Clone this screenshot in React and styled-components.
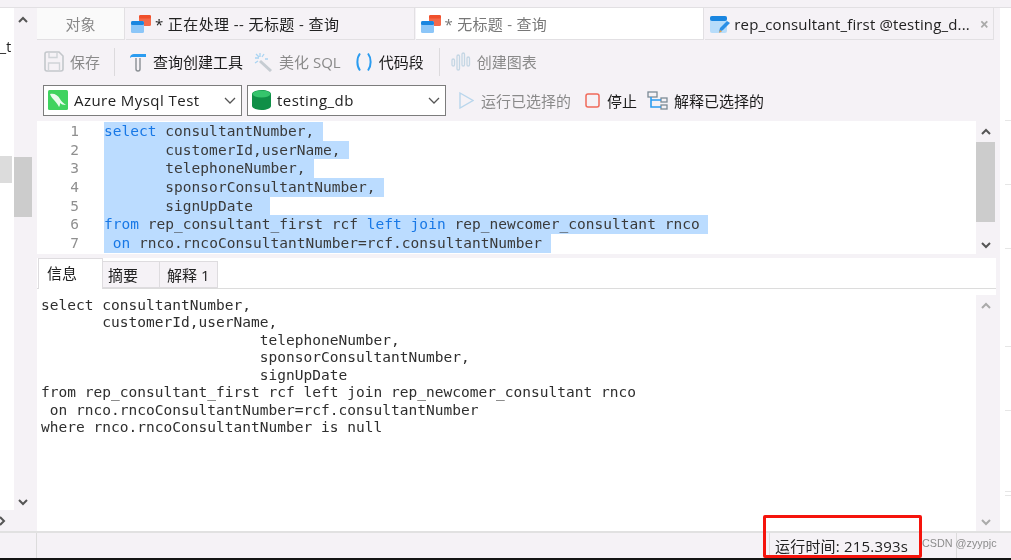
import React from "react";
import styled, { createGlobalStyle } from "styled-components";

const panel = "#f5f2f6";
const line = "#e2e0e3";
const ui = `"Open Sans", "Noto Sans CJK SC", sans-serif`;

const Global = createGlobalStyle`
  html, body { margin: 0; padding: 0; background: #fff; }
  body { font-family: ${ui}; overflow: hidden; }
`;

const Shell = styled.div`
  width: 1011px;
  height: 560px;
  position: relative;
  display: flex;
  flex-direction: column;
  overflow: hidden;
  background: ${panel};
  filter: blur(0.3px);
`;
const TopStrip = styled.div`
  height: 7px;
  flex: none;
  border-bottom: 1px solid ${line};
`;
const Body = styled.div`
  flex: 1;
  min-height: 0;
  display: flex;
`;
const LeftPane = styled.div`
  width: 14px;
  flex: none;
  display: flex;
  flex-direction: column;
`;
const Tree = styled.div`
  flex: 1;
  background: #fff;
  overflow: hidden;
  padding-top: 29px;
  font-size: 14px;
  line-height: 20px;
  color: #222;
  white-space: nowrap;
`;
const TreeSelected = styled.div`
  width: 12px;
  height: 27px;
  margin-top: 99px;
  background: #dcdcdc;
`;
const HScroll = styled.div`
  height: 21px;
  flex: none;
  display: flex;
  align-items: center;
`;
const Rail = styled.div`
  width: 23px;
  flex: none;
  display: flex;
  flex-direction: column;
  padding: 8px 5px 25px 0;
  box-sizing: border-box;
  align-items: center;
`;
const RailThumb = styled.div`
  width: 18px;
  height: 60px;
  margin-top: 134px;
  margin-bottom: auto;
  background: #cccccc;
`;
const Work = styled.div`
  width: 963px;
  flex: none;
  display: flex;
  flex-direction: column;
`;
const TabBar = styled.div`
  height: 32px;
  flex: none;
  display: flex;
  width: 958px;
`;
const Tab = styled.div`
  box-sizing: border-box;
  width: ${(p) => p.$w}px;
  margin-right: 1px;
  display: flex;
  align-items: center;
  padding-left: 5px;
  gap: 4px;
  font-size: 15px;
  white-space: nowrap;
  color: ${(p) => (p.$dim ? "#777" : "#222")};
  background: ${(p) => p.$bg};
  border-bottom: 1px solid ${line};
  border-right: 1px solid ${line};
`;
const ObjectTab = styled(Tab)`
  justify-content: center;
  padding-left: 0;
  color: #888;
`;
const TabTitle = styled.span`
  flex: 1;
  letter-spacing: ${(p) => p.$ls}px;
`;
const TabClose = styled.span`
  color: #aaa;
  font-size: 16px;
  font-weight: 700;
  margin-right: 4px;
  line-height: 1;
`;
const Toolbar = styled.div`
  height: 38px;
  box-sizing: border-box;
  padding: 5px 0 0 7px;
  flex: none;
  display: flex;
  align-items: center;
`;
const ToolItem = styled.div`
  display: flex;
  align-items: center;
  gap: ${(p) => p.$gap || 6}px;
  margin-left: ${(p) => p.$ml || 0}px;
  margin-right: ${(p) => p.$mr || 0}px;
  font-size: 15px;
  white-space: nowrap;
  color: ${(p) => (p.$dim ? "#8a8a8a" : "#1c1c1c")};
`;
const Divider = styled.div`
  width: 1px;
  height: 28px;
  background: #dcdadd;
  margin: 0 ${(p) => p.$r}px 0 ${(p) => p.$l}px;
`;
const RunBar = styled.div`
  height: 31px;
  margin-top: 7px;
  flex: none;
  display: flex;
  align-items: center;
  padding-left: 6px;
`;
const Select = styled.div`
  box-sizing: border-box;
  width: 199px;
  height: 31px;
  margin-right: 5px;
  display: flex;
  align-items: center;
  gap: 6px;
  padding: 0 4px 1px ${(p) => p.$pl}px;
  background: #fff;
  border: 1px solid #7c7c7c;
  font-size: 15px;
  letter-spacing: 0.45px;
  color: #222;
`;
const SelectText = styled.span`
  flex: 1;
`;
const Editor = styled.div`
  height: 133px;
  margin-top: 5px;
  flex: none;
  display: flex;
  width: 958px;
`;
const Code = styled.div`
  width: 939px;
  box-sizing: border-box;
  padding-top: 1px;
  background: #fff;
  font-family: "DejaVu Sans Mono", monospace;
  font-size: 14.5px;
  letter-spacing: 0.03px;
  overflow: hidden;
`;
const CodeRow = styled.div`
  height: 18.7px;
  line-height: 18.7px;
  display: flex;
  white-space: pre;
  color: #3a3a3a;
`;
const Gutter = styled.div`
  width: 42px;
  margin-right: 25px;
  text-align: right;
  color: #8f8f8f;
  flex: none;
`;
const Sel = styled.span`
  background: #bbdcff;
`;
const Kw = styled.span`
  color: #1878e6;
`;
const VScroll = styled.div`
  width: 19px;
  flex: none;
  display: flex;
  flex-direction: column;
  align-items: center;
  justify-content: space-between;
  padding: 7px 0 5px;
  box-sizing: border-box;
`;
const VThumb = styled.div`
  width: 19px;
  height: 80px;
  margin: 7px 0 auto;
  background: #cccccc;
`;
const ResultTabs = styled.div`
  height: 31px;
  margin-top: 4px;
  width: 959px;
  flex: none;
  box-sizing: border-box;
  background: #fff;
  display: flex;
  align-items: flex-end;
  padding-left: 1px;
  border-bottom: 1px solid #dcdcdc;
`;
const ResultTab = styled.div`
  box-sizing: border-box;
  width: ${(p) => p.$w}px;
  height: ${(p) => (p.$on ? 31 : 27)}px;
  display: flex;
  align-items: center;
  padding: 0 0 ${(p) => (p.$on ? 3 : 0)}px ${(p) => p.$pl}px;
  font-size: 15px;
  color: #222;
  background: ${(p) => (p.$on ? "#fff" : panel)};
  border: 1px solid #dedcdf;
  border-left-width: ${(p) => (p.$on ? 1 : 0)}px;
  border-bottom: ${(p) => (p.$on ? "none" : "1px solid #dedcdf")};
  margin-bottom: ${(p) => (p.$on ? -1 : 0)}px;
`;
const ResultGap = styled.div`
  height: 6px;
  width: 959px;
  flex: none;
  background: #fff;
`;
const ResultArea = styled.div`
  flex: 1;
  min-height: 0;
  display: flex;
  width: 958px;
`;
const Output = styled.pre`
  margin: 0;
  width: 939px;
  box-sizing: border-box;
  padding: 2px 0 0 4px;
  background: #fff;
  font-family: "DejaVu Sans Mono", monospace;
  font-size: 14.5px;
  letter-spacing: 0.02px;
  line-height: 17.43px;
  color: #2e2e2e;
`;
const RightPane = styled.div`
  width: 11px;
  flex: none;
  background: #fff;
  display: flex;
  flex-direction: column;
  padding-left: 5px;
  box-sizing: border-box;
`;
const RightRule = styled.div`
  height: 1px;
  flex: none;
  margin-top: ${(p) => p.$mt}px;
  background: #e6e6e6;
`;
const StatusBar = styled.div`
  box-sizing: border-box;
  height: 27px;
  flex: none;
  display: flex;
  align-items: center;
  border-top: 2px solid #e1e1e1;
`;
const StatusCell = styled.div`
  box-sizing: border-box;
  width: ${(p) => p.$w}px;
  height: 100%;
  flex: none;
  padding-left: 5px;
  border-right: ${(p) => (p.$edge ? "1px solid #dcdcdc" : "none")};
  display: flex;
  align-items: center;
  font-size: 15px;
  letter-spacing: 0.2px;
  color: #222;
  white-space: nowrap;
`;
const BlackEdge = styled.div`
  height: 2px;
  flex: none;
  background: #141414;
`;
const RedBox = styled.div`
  position: absolute;
  left: 763px;
  top: 515px;
  width: 159px;
  height: 43px;
  box-sizing: border-box;
  border: 3px solid #f5140c;
  border-radius: 2px;
`;
const Watermark = styled.div`
  position: absolute;
  left: 922px;
  top: 536px;
  font-family: "Liberation Sans", sans-serif;
  font-size: 10.8px;
  line-height: 14px;
  color: #8c8c8c;
  white-space: nowrap;
`;

const Chevron = ({ up, color = "#555" }) => (
  <svg width="10" height="7" viewBox="0 0 10 7" style={{ flex: "none" }}>
    <polyline
      points={up ? "1,6 5,2 9,6" : "1,1 5,5 9,1"}
      fill="none"
      stroke={color}
      strokeWidth="2"
    />
  </svg>
);
const SelectChevron = () => (
  <svg width="12" height="7" viewBox="0 0 12 7" style={{ flex: "none", marginRight: 1 }}>
    <polyline points="1,1 6,6 11,1" fill="none" stroke="#555" strokeWidth="1.3" />
  </svg>
);
const QueryIcon = () => (
  <svg width="20" height="20" viewBox="0 0 20 20" style={{ flex: "none" }}>
    <rect x="8" y="1" width="12" height="11" rx="1.5" fill="#f4694a" />
    <rect x="8" y="1" width="12" height="3.5" rx="1.5" fill="#f0502c" />
    <rect x="0" y="7" width="13" height="12" rx="1.5" fill="#8cc6f8" />
    <rect x="0" y="7" width="13" height="4" rx="1.5" fill="#1a86e0" />
  </svg>
);
const TableEditIcon = () => (
  <svg width="20" height="20" viewBox="0 0 20 20" style={{ flex: "none" }}>
    <rect x="0" y="2" width="17" height="17" rx="2" fill="#b7dcfa" />
    <rect x="0" y="2" width="17" height="5" rx="2" fill="#1a86e0" />
    <path d="M9 18l1-4 7-7 3 2-7 7z" fill="#2b8fe6" />
    <path d="M9 19l1-3 2 1.5z" fill="#e8a24a" />
  </svg>
);
const SaveIcon = () => (
  <svg width="20" height="21" viewBox="0 0 20 21" style={{ flex: "none" }}>
    <path d="M1 3a2 2 0 0 1 2-2h12l4 4v13a2 2 0 0 1-2 2H3a2 2 0 0 1-2-2z" fill="none" stroke="#c3c7cb" strokeWidth="1.6" />
    <path d="M5 1.500v5h8v-5M4.500 20v-8h11v8" fill="none" stroke="#d0d4d8" strokeWidth="1.4" />
  </svg>
);
const BuilderIcon = () => (
  <svg width="18" height="20" viewBox="0 0 18 20" style={{ flex: "none" }}>
    <path d="M1 6c0-3 2-4 4-4h12v3H3.500C2.500 5 1.500 5.500 1 6z" fill="#2b9cf0" />
    <path d="M7 6v11a2 2 0 0 0 4 0V6" fill="none" stroke="#8a8f94" strokeWidth="1.4" />
  </svg>
);
const WandIcon = () => (
  <svg width="19" height="20" viewBox="0 0 19 20" style={{ flex: "none" }}>
    <path d="M6 9l11 10" stroke="#c6ccd2" strokeWidth="3" />
    <path d="M6 1v4M1 6h4M2 2l3 3M10 2L8 5M1 11l3-2M11 7h3" stroke="#a9d4f2" strokeWidth="1.3" />
  </svg>
);
const ParensIcon = () => (
  <svg width="18" height="20" viewBox="0 0 18 20" style={{ flex: "none" }}>
    <path d="M5 1.500C1.500 6 1.500 14 5 18.500M13 1.500c3.500 4.500 3.500 12.500 0 17" fill="none" stroke="#2b9cf0" strokeWidth="2" />
  </svg>
);
const ChartIcon = () => (
  <svg width="20" height="20" viewBox="0 0 20 20" style={{ flex: "none" }}>
    <g fill="none" stroke="#c4d6e4" strokeWidth="1.3">
      <rect x="1" y="7" width="2.5" height="7" rx="1.25" />
      <rect x="6" y="3" width="2.5" height="15" rx="1.25" />
      <rect x="11" y="1" width="2.5" height="13" rx="1.25" />
      <rect x="16" y="5" width="2.5" height="9" rx="1.25" />
    </g>
  </svg>
);
const MysqlIcon = () => (
  <svg width="20" height="20" viewBox="0 0 20 20" style={{ flex: "none" }}>
    <rect width="20" height="20" rx="1.5" fill="#3fd35f" />
    <path d="M2 4c4-1 8 1 10 5 1 2 3 4 6 6-3 0-5-1-6-2 0 1 0 3-1 4-1-2-3-5-5-7-1-1-3-3-4-6z" fill="#e9fbee" />
  </svg>
);
const DbIcon = () => (
  <svg width="19" height="20" viewBox="0 0 19 20" style={{ flex: "none" }}>
    <path d="M0 4c0-2 4-4 9.500-4S19 2 19 4v12c0 2-4 4-9.500 4S0 18 0 16z" fill="#0f8f47" />
    <ellipse cx="9.5" cy="4" rx="9" ry="3.5" fill="#35c46c" />
  </svg>
);
const PlayIcon = () => (
  <svg width="15" height="17" viewBox="0 0 15 17" style={{ flex: "none" }}>
    <path d="M1 1l13 7.500L1 16z" fill="none" stroke="#b9d6ec" strokeWidth="1.4" />
  </svg>
);
const StopIcon = () => (
  <svg width="15" height="15" viewBox="0 0 15 15" style={{ flex: "none" }}>
    <rect x="1" y="1" width="13" height="13" rx="2" fill="none" stroke="#f0695a" strokeWidth="1.5" />
  </svg>
);
const ExplainIcon = () => (
  <svg width="21" height="20" viewBox="0 0 21 20" style={{ flex: "none" }}>
    <g fill="none" strokeWidth="1.3">
      <rect x="1" y="1" width="9" height="5" stroke="#7b8a96" />
      <rect x="14" y="7" width="6" height="4" stroke="#7b8a96" />
      <rect x="14" y="14" width="6" height="4" stroke="#7b8a96" />
      <path d="M4 6v10h10M4 9h10" stroke="#2b9cf0" strokeWidth="1.6" />
    </g>
  </svg>
);

const editorLines = [
  <><Kw>select</Kw> consultantNumber, </>,
  "       customerId,userName, ",
  "       telephoneNumber, ",
  "       sponsorConsultantNumber, ",
  "       signUpDate  ",
  <><Kw>from</Kw> rep_consultant_first rcf <Kw>left join</Kw> rep_newcomer_consultant rnco </>,
  <> <Kw>on</Kw> rnco.rncoConsultantNumber=rcf.consultantNumber </>,
];

const outputText = `select consultantNumber,
       customerId,userName,
                         telephoneNumber,
                         sponsorConsultantNumber,
                         signUpDate
from rep_consultant_first rcf left join rep_newcomer_consultant rnco
 on rnco.rncoConsultantNumber=rcf.consultantNumber
where rnco.rncoConsultantNumber is null`;

const rightRuleGaps = [112, 63, 63, 97, 63, 80, 3];

export default function App() {
  return (
    <Shell>
      <Global />
      <TopStrip />
      <Body>
        <LeftPane>
          <Tree>
            _t
            <TreeSelected />
          </Tree>
          <HScroll>
            <svg width="6" height="10" viewBox="0 0 6 10">
              <polyline points="0,1 4,5 0,9" fill="none" stroke="#555" strokeWidth="2" />
            </svg>
          </HScroll>
        </LeftPane>
        <Rail>
          <Chevron up />
          <RailThumb />
          <Chevron />
        </Rail>
        <Work>
          <TabBar>
            <ObjectTab $w={88} $bg="#fafafa">对象</ObjectTab>
            <Tab $w={289} $bg={panel}>
              <QueryIcon />
              <TabTitle $ls={0.4}>* 正在处理 -- 无标题 - 查询</TabTitle>
            </Tab>
            <Tab $w={289} $bg="#fff" $dim>
              <QueryIcon />
              <TabTitle $ls={0.25}>* 无标题 - 查询</TabTitle>
            </Tab>
            <Tab $w={289} $bg={panel}>
              <TableEditIcon />
              <TabTitle $ls={0.15}>rep_consultant_first @testing_d...</TabTitle>
              <TabClose>×</TabClose>
            </Tab>
          </TabBar>
          <Toolbar>
            <ToolItem $dim>
              <SaveIcon />
              保存
            </ToolItem>
            <Divider $l={14} $r={14} />
            <ToolItem $mr={11}>
              <BuilderIcon />
              查询创建工具
            </ToolItem>
            <ToolItem $dim $mr={14}>
              <WandIcon />
              美化 SQL
            </ToolItem>
            <ToolItem>
              <ParensIcon />
              代码段
            </ToolItem>
            <Divider $l={15} $r={11} />
            <ToolItem $dim>
              <ChartIcon />
              创建图表
            </ToolItem>
          </Toolbar>
          <RunBar>
            <Select $pl={4}>
              <MysqlIcon />
              <SelectText>Azure Mysql Test</SelectText>
              <SelectChevron />
            </Select>
            <Select $pl={4}>
              <DbIcon />
              <SelectText>testing_db</SelectText>
              <SelectChevron />
            </Select>
            <ToolItem $dim $ml={8} $mr={14} $gap={7}>
              <PlayIcon />
              运行已选择的
            </ToolItem>
            <ToolItem $mr={10} $gap={7}>
              <StopIcon />
              停止
            </ToolItem>
            <ToolItem>
              <ExplainIcon />
              解释已选择的
            </ToolItem>
          </RunBar>
          <Editor>
            <Code>
              {editorLines.map((text, i) => (
                <CodeRow key={i}>
                  <Gutter>{i + 1}</Gutter>
                  <Sel>{text}</Sel>
                </CodeRow>
              ))}
            </Code>
            <VScroll>
              <Chevron up />
              <VThumb />
              <Chevron />
            </VScroll>
          </Editor>
          <ResultTabs>
            <ResultTab $w={65} $pl={8} $on>信息</ResultTab>
            <ResultTab $w={57} $pl={5}>摘要</ResultTab>
            <ResultTab $w={58} $pl={7}>解释 1</ResultTab>
          </ResultTabs>
          <ResultGap />
          <ResultArea>
            <Output>{outputText}</Output>
            <VScroll>
              <Chevron up color="#aaa" />
              <Chevron color="#aaa" />
            </VScroll>
          </ResultArea>
        </Work>
        <RightPane>
          {rightRuleGaps.map((gap, i) => (
            <RightRule key={i} $mt={gap} />
          ))}
        </RightPane>
      </Body>
      <StatusBar>
        <StatusCell $w={37} $edge />
        <StatusCell $w={733} $edge />
        <StatusCell $w={187} $edge>运行时间: 215.393s</StatusCell>
      </StatusBar>
      <BlackEdge />
      <RedBox />
      <Watermark>CSDN @zyypjc</Watermark>
    </Shell>
  );
}
